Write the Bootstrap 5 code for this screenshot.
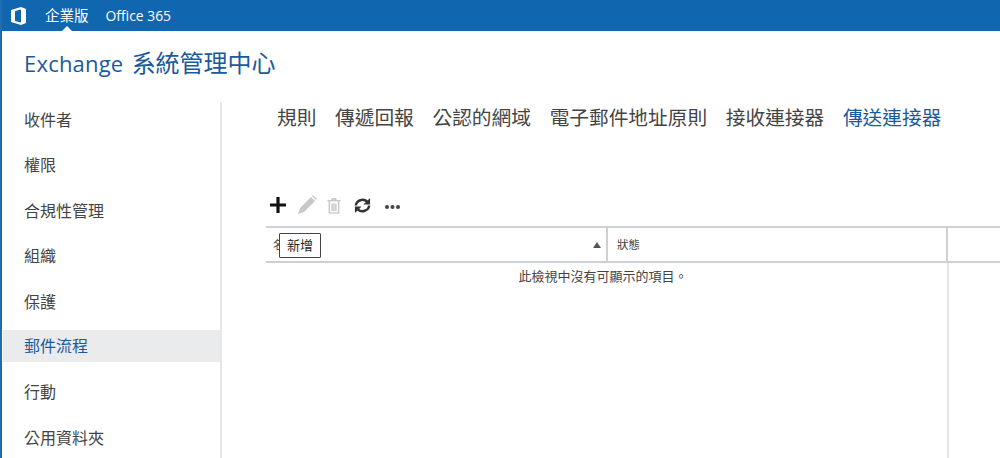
<!DOCTYPE html>
<html lang="zh-Hant">
<head>
<meta charset="utf-8">
<title>Exchange 系統管理中心</title>
<link href="https://cdn.jsdelivr.net/npm/bootstrap@5.3.0/dist/css/bootstrap.min.css" rel="stylesheet">
<style>
html,body{height:458px;overflow:hidden;background:#fff}
body{font-family:"Open Sans","Noto Sans CJK TC",sans-serif;color:#333;border-left:2px solid #1f6cb0}
.topbar{height:31px;background:#1166b0;color:#fff;font-size:14.5px;margin-left:-2px}
.topbar .logo{width:45px}
.topbar .tnav{line-height:29px}
.topbar .latin{font-size:13.9px;margin-left:1px}
.caret-up{position:absolute;left:62px;top:26px;width:0;height:0;border:5px solid transparent;border-top:0;border-bottom-color:#fff}
.title{font-size:24px;color:#1a5a9a;padding:17px 0 0 22px;height:71px;line-height:30px;word-spacing:2px}
.title .latin{font-size:22px;letter-spacing:.2px}
.main{height:356px;overflow:hidden}
.side{width:220px;border-right:2px solid #e6e7e8;flex:none;padding-top:2px}
.side a{display:block;height:33.4px;line-height:33px;margin-bottom:12px;padding-left:22px;font-size:16px;color:#444;text-decoration:none}
.side a:last-child{margin-bottom:0}
.side a.on{background:#e9ebed;color:#1a5a9a;height:32px;margin:-1px 0 14.4px 1px;padding-left:21px}
.content{flex:1;min-width:0;padding-left:44px}
.tabs{font-size:19.7px;gap:18.7px;height:90px;color:#444;line-height:30px;margin-top:1px;padding-left:11px}
.tabs .on{color:#1a5a9a}
.tools{height:24px;margin-bottom:9px;padding-left:3px}
.tools svg{flex:none}
.t-plus{margin-right:10px}
.t-pen{margin-right:9px}
.t-bin{margin-right:12px}
.t-sync{margin-right:14px}
.t-more{margin-top:4px}
.gridbox{border-top:2px solid #cdd1d3;position:relative;height:232px}
.ghead{height:35px;border-bottom:2px solid #cdd1d3;font-size:11.5px;color:#444}
.c1{width:342px;border-right:2px solid #cdd1d3;position:relative}
.c2{width:340px;border-right:2px solid #cdd1d3;padding-left:9px;line-height:33px}
.sort{position:absolute;right:5px;top:14px;width:0;height:0;border:4px solid transparent;border-top:0;border-bottom:6px solid #555}
.stub{font-size:11px;padding-left:7px;line-height:33px}
.tip{position:absolute;left:13px;top:5px;width:42px;height:25px;border:1px solid #444;border-radius:1px;background:#fff;font-size:13px;line-height:23px;text-align:center;color:#222}
.gbody{height:195px}
.b1{width:683px;border-right:2px solid #e3e5e6;font-size:13px;color:#444;text-align:center;padding-top:3px;padding-right:7px;line-height:20px}
</style>
</head>
<body>
<div class="topbar d-flex align-items-center position-relative">
  <div class="logo d-flex justify-content-center pe-2">
    <svg width="18" height="20" viewBox="0 0 18 20"><path fill="#fff" d="M1 4 11 1l5 2v14l-5 2-10-3zM11 3.4 5 5v10l6 1.6z"/></svg>
  </div>
  <span class="tnav me-3">企業版</span>
  <span class="tnav latin">Office 365</span>
  <span class="caret-up"></span>
</div>
<div class="title"><span class="latin">Exchange</span> 系統管理中心</div>
<div class="main d-flex">
  <nav class="side">
    <a href="#">收件者</a>
    <a href="#">權限</a>
    <a href="#">合規性管理</a>
    <a href="#">組織</a>
    <a href="#">保護</a>
    <a href="#" class="on">郵件流程</a>
    <a href="#">行動</a>
    <a href="#">公用資料夾</a>
  </nav>
  <div class="content">
    <div class="tabs d-flex">
      <span>規則</span><span>傳遞回報</span><span>公認的網域</span><span>電子郵件地址原則</span><span>接收連接器</span><span class="on">傳送連接器</span>
    </div>
    <div class="tools d-flex align-items-center">
      <svg class="t-plus" width="18" height="18" viewBox="0 0 18 18"><path stroke="#111" stroke-width="3.2" d="M9 1v16M1 9h16"/></svg>
      <svg class="t-pen" width="20" height="20" viewBox="0 0 20 20"><path fill="#c8c8c8" d="M1 19l2-6L14 2l4 4L7 17zM15 1l1-1 4 4-1 1z"/></svg>
      <svg class="t-bin" width="16" height="17" viewBox="0 0 16 18" fill="none" stroke="#bbb" stroke-width="1.2"><path d="M1 4h14M6 4V2h4v2M3 4v13h10V4M6 7v8M8 7v8M10 7v8"/></svg>
      <svg class="t-sync" width="17" height="17" viewBox="0 0 18 18" fill="none" stroke="#333" stroke-width="2.6"><path d="M2 9a7 6.5 0 0 1 12-4M16 9a7 6.5 0 0 1-12 4"/><path fill="#333" stroke="none" d="M17 1v7h-7zM1 17v-7h7z"/></svg>
      <svg class="t-more" width="15" height="4" viewBox="0 0 15 4" fill="#444"><circle cx="2" cy="2" r="2"/><circle cx="7.5" cy="2" r="2"/><circle cx="13" cy="2" r="2"/></svg>
    </div>
    <div class="gridbox">
      <div class="ghead d-flex">
        <div class="c1"><span class="stub">名</span><span class="sort"></span></div>
        <div class="c2">狀態</div>
      </div>
      <div class="tip">新增</div>
      <div class="gbody d-flex"><div class="b1">此檢視中沒有可顯示的項目。</div></div>
    </div>
  </div>
</div>
</body>
</html>
